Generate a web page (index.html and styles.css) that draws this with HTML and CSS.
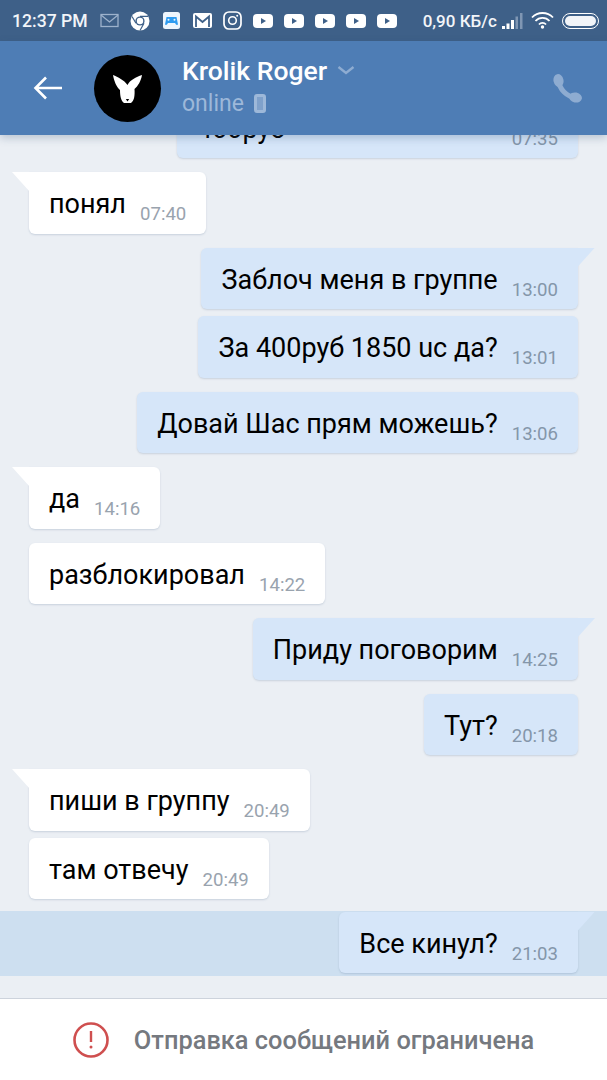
FILE: index.html
```html
<!DOCTYPE html>
<html>
<head>
    <title>Krolik Roger</title>
    <link rel="stylesheet" href="styles.css">
</head>
<body>
    <div class="statusbar">
        <span class="clock">12:37 PM</span>
        <svg class="st-icon" width="19" height="15" viewBox="0 0 19 15"><rect x="1" y="1.500" width="17" height="12" fill="none" stroke="#9db2cc" stroke-width="1.300"/><path d="M1 2l8.500 7L18 2" fill="none" stroke="#9db2cc" stroke-width="1.300"/></svg>
        <svg class="st-icon" width="20" height="20" viewBox="0 0 20 20"><circle cx="10" cy="10" r="9.500" fill="#fff"/><circle cx="10" cy="10" r="4.600" fill="#3e6088"/><circle cx="10" cy="10" r="3.200" fill="#fff"/><path d="M10 5.400h8M6 12.300L2 5.500M14 12.300L10 19.500" stroke="#3e6088" stroke-width="1.200"/></svg>
        <svg class="st-icon st-game" width="17" height="17" viewBox="0 0 17 17"><rect width="17" height="17" rx="2.500" fill="#eef6fd"/><path d="M2 12.500L3.500 5h10l1.500 7.500c-1 1-2 .5-3-1.500H5c-1 2-2 2.500-3 1.500z" fill="#2f9cf0"/><circle cx="5.500" cy="7.800" r="1" fill="#eef6fd"/><circle cx="11.500" cy="7.800" r="1" fill="#eef6fd"/></svg>
        <svg class="st-icon" width="19" height="15" viewBox="0 0 19 15"><rect width="19" height="15" rx="2" fill="#fff"/><path d="M3 14V3.500l6.500 5.500L16 3.500V14" fill="none" stroke="#3e6088" stroke-width="1.800"/></svg>
        <svg class="st-icon" width="19" height="19" viewBox="0 0 19 19"><rect x="1" y="1" width="17" height="17" rx="5" fill="none" stroke="#fff" stroke-width="1.700"/><circle cx="9.500" cy="9.500" r="3.800" fill="none" stroke="#fff" stroke-width="1.600"/><circle cx="14.200" cy="4.800" r="1" fill="#fff"/></svg>
        <svg class="st-icon" width="20" height="14" viewBox="0 0 20 14"><rect width="20" height="14" rx="4" fill="#fff"/><path d="M8 4l5 3-5 3z" fill="#3e6088"/></svg>
        <svg class="st-icon" width="20" height="14" viewBox="0 0 20 14"><rect width="20" height="14" rx="4" fill="#fff"/><path d="M8 4l5 3-5 3z" fill="#3e6088"/></svg>
        <svg class="st-icon" width="20" height="14" viewBox="0 0 20 14"><rect width="20" height="14" rx="4" fill="#fff"/><path d="M8 4l5 3-5 3z" fill="#3e6088"/></svg>
        <svg class="st-icon" width="20" height="14" viewBox="0 0 20 14"><rect width="20" height="14" rx="4" fill="#fff"/><path d="M8 4l5 3-5 3z" fill="#3e6088"/></svg>
        <svg class="st-icon" width="20" height="14" viewBox="0 0 20 14"><rect width="20" height="14" rx="4" fill="#fff"/><path d="M8 4l5 3-5 3z" fill="#3e6088"/></svg>
        <span class="speed">0,90 КБ/с</span>
        <svg class="st-signal" width="21" height="16" viewBox="0 0 21 16"><path d="M0 13h3v3H0zM4.500 10.500h3V16h-3zM9 7h3v9H9z" fill="#fff"/><path d="M13.500 3.500H16V16h-2.500zM18 0h2.500v16H18z" fill="#7f96b3"/></svg>
        <svg class="st-wifi" width="23" height="17" viewBox="0 0 23 17"><g fill="none" stroke="#fff" stroke-width="1.800"><path d="M1 5.500a14.500 14.500 0 0 1 21 0"/><path d="M4.500 9a9.500 9.500 0 0 1 14 0"/><path d="M8 12.500a4.500 4.500 0 0 1 7 0"/></g><circle cx="11.500" cy="15" r="1.700" fill="#fff"/></svg>
        <div class="battery"><div class="battery-fill"></div></div>
    </div>

    <div class="topbar">
        <svg class="back" width="30" height="26" viewBox="0 0 30 26"><path d="M29 13H3.500M13 2.500L2.500 13 13 23.500" fill="none" stroke="#fff" stroke-width="2.600"/></svg>
        <div class="avatar">
            <svg width="29" height="29" viewBox="0 0 29 29"><path d="M0 1C5 3 11 6 14.500 11 17 6 23 3 29 1c-1 6-4 11-7.500 14 .5 7-.5 12-3.500 14h-7c-3-2-4-7-4-13C3.500 13 1 7 0 1z" fill="#fff"/><path d="M12.800 25h3.400l-1.700 2.500z" fill="#000"/></svg>
        </div>
        <div class="peer">
            <div class="peer-name">Krolik Roger <svg width="18" height="9" viewBox="0 0 18 9"><path d="M1.500 1L9 7l7.500-6" fill="none" stroke="#8eacd1" stroke-width="2.400"/></svg></div>
            <div class="peer-status">online <span class="phone-mark"></span></div>
        </div>
        <svg class="call" width="29" height="29" viewBox="0 0 29 29"><path d="M5.500 6C6 15 14 23 23 23.500" fill="none" stroke="#8eacd1" stroke-width="5"/><ellipse cx="5.500" cy="6.500" rx="5" ry="6.500" transform="rotate(-12 5.500 6.500)" fill="#8eacd1"/><ellipse cx="22.500" cy="23.500" rx="6.500" ry="5" transform="rotate(12 22.500 23.500)" fill="#8eacd1"/></svg>
    </div>

    <div class="chat">
        <div class="row out first group"><div class="bubble cut"><span class="text">400руб</span><span class="time">07:35</span></div></div>
        <div class="row in tail group"><div class="bubble"><span class="text">понял</span><span class="time">07:40</span></div></div>
        <div class="row out tail"><div class="bubble"><span class="text">Заблоч меня в группе</span><span class="time">13:00</span></div></div>
        <div class="row out group"><div class="bubble"><span class="text">За 400руб 1850 uc да?</span><span class="time">13:01</span></div></div>
        <div class="row out group"><div class="bubble"><span class="text">Довай Шас прям можешь?</span><span class="time">13:06</span></div></div>
        <div class="row in tail group"><div class="bubble"><span class="text">да</span><span class="time">14:16</span></div></div>
        <div class="row in group"><div class="bubble"><span class="text">разблокировал</span><span class="time">14:22</span></div></div>
        <div class="row out tail group"><div class="bubble"><span class="text">Приду поговорим</span><span class="time">14:25</span></div></div>
        <div class="row out group"><div class="bubble"><span class="text">Тут?</span><span class="time">20:18</span></div></div>
        <div class="row in tail"><div class="bubble"><span class="text">пиши в группу</span><span class="time">20:49</span></div></div>
        <div class="row in group"><div class="bubble"><span class="text">там отвечу</span><span class="time">20:49</span></div></div>
        <div class="row out tail unread"><div class="bubble"><span class="text">Все кинул?</span><span class="time">21:03</span></div></div>
    </div>

    <div class="blocked">
        <svg width="36" height="36" viewBox="0 0 36 36"><circle cx="18" cy="18" r="16.500" fill="none" stroke="#cf4f4f" stroke-width="2.600"/><path d="M18 9v11" stroke="#cf4f4f" stroke-width="2.400"/><circle cx="18" cy="25" r="1.500" fill="#cf4f4f"/></svg>
        <span>Отправка сообщений ограничена</span>
    </div>
</body>
</html>
```

FILE: styles.css
```css
body { margin: 0; height: 1080px; display: flex; flex-direction: column; overflow: hidden; font-family: Roboto, sans-serif; background: #ebeff4; }

.statusbar { height: 41px; flex: none; display: flex; align-items: center; padding: 0 9px 0 12px; box-sizing: border-box; background: #3e6088; color: #f2f5f9; font-weight: 500; }
.clock { font-size: 17.600px; margin-right: 12px; white-space: nowrap; }
.st-icon { flex: none; margin-right: 11px; }
.st-game { margin-left: 2px; margin-right: 13px; }
.speed { font-size: 17px; margin-left: 15px; margin-right: 5px; white-space: nowrap; }
.st-signal { flex: none; margin-right: 8px; }
.st-wifi { flex: none; margin-right: 8px; }
.battery { width: 37px; height: 16px; flex: none; box-sizing: border-box; border: 1.500px solid #fff; border-radius: 9px; padding: 2px; }
.battery-fill { height: 100%; border-radius: 6px; background: #f1f4f8; }

.topbar { position: relative; z-index: 2; height: 94px; flex: none; display: flex; align-items: center; box-sizing: border-box; padding-left: 33px; background: #4e7db5; box-shadow: 0 3px 8px rgba(40, 70, 110, 0.25); }
.back { flex: none; margin-right: 31px; }
.avatar { width: 67px; height: 67px; flex: none; border-radius: 50%; background: #000; display: flex; align-items: center; justify-content: center; margin-right: 21px; }
.peer { flex: 1; padding-bottom: 4px; }
.peer-name { font-size: 26.500px; font-weight: 500; color: #fff; display: flex; align-items: center; gap: 10px; }
.peer-status { font-size: 23px; color: #9db8d9; margin-top: 4px; display: flex; align-items: center; gap: 10px; }
.phone-mark { width: 12px; height: 19px; box-sizing: border-box; border: 3px solid #9db8d9; border-radius: 3px; background: #7fa1cb; }
.call { flex: none; margin-right: 25px; }

.chat { flex: 1; overflow: hidden; display: flex; flex-direction: column; gap: 7px; }
.row { display: flex; padding: 0 29px; flex: none; }
.row.out { justify-content: flex-end; }
.row.first { margin-top: -38.500px; }
.row.group { margin-bottom: 7px; }
.row.unread { padding-top: 1px; padding-bottom: 3px; background: #cddff0; margin-top: -2.500px; }
.bubble { position: relative; height: 61.500px; box-sizing: border-box; display: flex; align-items: flex-start; padding: 0 20px; border-radius: 6px; background: #fff; box-shadow: 0 1px 2px rgba(60, 90, 130, 0.2); }
.row.out .bubble { background: #d6e6f9; }
.bubble.cut { width: 401px; justify-content: space-between; }
.text { font-size: 27px; line-height: 30px; padding-top: 17px; color: #000; white-space: nowrap; }
.time { font-size: 18.600px; line-height: 22px; padding-top: 31px; margin-left: 14px; color: #99a3ae; }
.row.out .time { color: #8496aa; }

.row.tail .bubble::before { content: ""; position: absolute; top: 0; width: 18px; height: 20px; background: inherit; }
.row.in.tail .bubble { border-top-left-radius: 0; }
.row.out.tail .bubble { border-top-right-radius: 0; }
.row.in.tail .bubble::before { left: -17px; clip-path: polygon(0 0, 100% 0, 100% 100%); }
.row.out.tail .bubble::before { right: -17px; clip-path: polygon(0 0, 100% 0, 0 100%); }

.blocked { height: 82px; flex: none; box-sizing: border-box; border-top: 1px solid #cdd3dc; background: #fff; display: flex; align-items: center; justify-content: center; gap: 25px; font-size: 25.400px; font-weight: 500; color: #75797f; }
.blocked svg { flex: none; }
```
